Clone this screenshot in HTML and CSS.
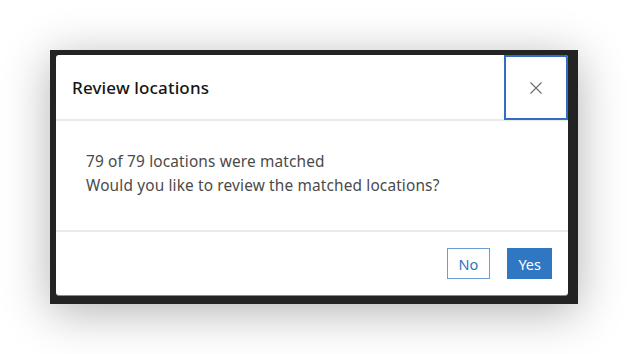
FILE: index.html
```html
<!DOCTYPE html>
<html lang="en">
<head>
<meta charset="utf-8">
<title>Review locations</title>
<link rel="stylesheet" href="styles.css">
</head>
<body>
<div class="frame">
  <div class="dialog">
    <div class="header">
      <h2 class="title">Review locations</h2>
      <button class="close" aria-label="Close">
        <svg width="12" height="12" viewBox="0 0 12 12"><path d="M0.5 0.5 L11.5 11.5 M11.5 0.5 L0.5 11.5" stroke="#6b6b6b" stroke-width="1.1" fill="none"/></svg>
      </button>
    </div>
    <div class="content">
      <p class="line">79 of 79 locations were matched</p>
      <p class="line">Would you like to review the matched locations?</p>
    </div>
    <div class="footer">
      <button class="btn btn-outline">No</button>
      <button class="btn btn-solid">Yes</button>
    </div>
  </div>
</div>
</body>
</html>
```
FILE: styles.css
```css
html, body {
  margin: 0;
  padding: 0;
  background: #ffffff;
}
body {
  width: 629px;
  height: 354px;
  overflow: hidden;
  font-family: "Noto Sans", "Open Sans", sans-serif;
}
.frame {
  margin: 50px 0 0 50px;
  width: 528px;
  height: 254px;
  box-sizing: border-box;
  padding: 5px 10px 9px 6px;
  background: #232323;
  box-shadow: 0 8px 44px rgba(0, 0, 0, 0.3);
}
.dialog {
  height: 100%;
  background: #ffffff;
  border-radius: 3px;
  display: flex;
  flex-direction: column;
  box-shadow: 0 1px 0 #8a8a8a;
}
.header {
  display: flex;
  align-items: stretch;
  height: 64px;
  border-bottom: 2px solid #eaeaea;
}
.title {
  flex: 1;
  margin: 0;
  padding-left: 16px;
  display: flex;
  align-items: center;
  font-size: 17px;
  font-weight: 500;
  letter-spacing: 0.15px;
  color: #151515;
}
.close {
  width: 64px;
  height: 65px;
  margin: 0;
  padding: 0;
  box-sizing: border-box;
  border: 2px solid #2f6fc0;
  background: #ffffff;
  display: flex;
  align-items: center;
  justify-content: center;
  border-top-right-radius: 3px;
}
.content {
  flex: 1;
  padding: 29px 30px 30px;
}
.line {
  margin: 0;
  font-size: 15.4px;
  letter-spacing: 0.15px;
  line-height: 24px;
  color: #4a4a4a;
}
.footer {
  display: flex;
  justify-content: flex-end;
  gap: 17px;
  padding: 16px 16px 16px;
  border-top: 2px solid #eaeaea;
}
.btn {
  height: 31px;
  box-sizing: border-box;
  font-family: inherit;
  font-size: 14.5px;
  padding: 0 11px;
  margin: 0;
  border-radius: 0;
}
.btn-outline {
  background: #ffffff;
  border: 1px solid #6a9fd6;
  color: #2f73c0;
}
.btn-solid {
  background: #2f77c3;
  border: 1px solid #2f77c3;
  color: #ffffff;
  padding: 0 10px;
}
```
